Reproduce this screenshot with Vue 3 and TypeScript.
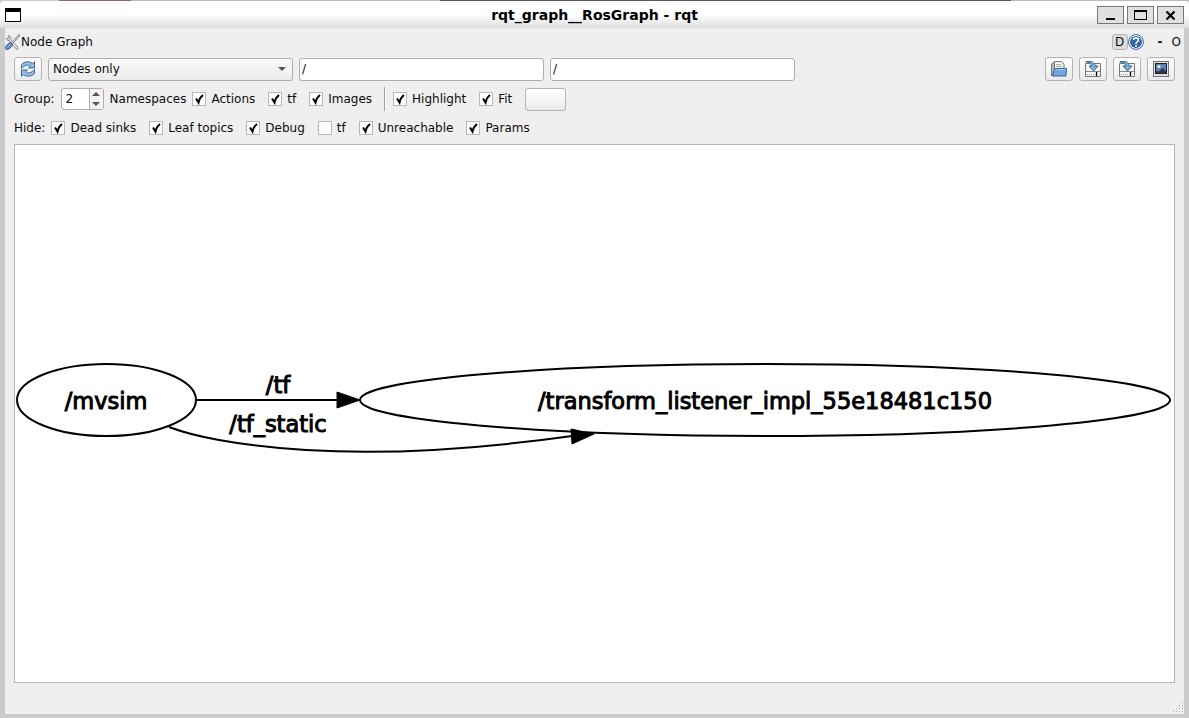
<script setup lang="ts">
import { reactive, ref } from 'vue'

interface Option {
  id: string
  label: string
  on: boolean
}

const mode = ref('Nodes only')
const filterA = ref('/')
const filterB = ref('/')
const depth = ref(2)

const groupOptions = reactive<Option[]>([
  { id: 'actions', label: 'Actions', on: true },
  { id: 'group-tf', label: 'tf', on: true },
  { id: 'images', label: 'Images', on: true },
])
const viewOptions = reactive<Option[]>([
  { id: 'highlight', label: 'Highlight', on: true },
  { id: 'fit', label: 'Fit', on: true },
])
const hideOptions = reactive<Option[]>([
  { id: 'dead', label: 'Dead sinks', on: true },
  { id: 'leaf', label: 'Leaf topics', on: true },
  { id: 'debug', label: 'Debug', on: true },
  { id: 'hide-tf', label: 'tf', on: false },
  { id: 'unreachable', label: 'Unreachable', on: true },
  { id: 'params', label: 'Params', on: true },
])
</script>

<template>
  <div class="window">
    <div class="backdrop"></div>
    <header class="titlebar">
      <svg class="win-icon" viewBox="0 0 16 14" aria-hidden="true">
        <rect x="0.5" y="0.5" width="15" height="13" fill="#fff" stroke="#000" />
        <rect width="16" height="4" />
      </svg>
      <h1>rqt_graph__RosGraph - rqt</h1>
      <div class="win-buttons">
        <button type="button" aria-label="Minimize">
          <svg viewBox="0 0 25 16"><rect x="8" y="11" width="9" height="2" /></svg>
        </button>
        <button type="button" aria-label="Maximize">
          <svg viewBox="0 0 25 16"><path d="M6 3h13v10H6zM7 5v7h11V5z" fill-rule="evenodd" /></svg>
        </button>
        <button type="button" aria-label="Close">
          <svg viewBox="0 0 25 16"><path d="M8.500 4.500l8 8M16.500 4.500l-8 8" stroke="#000" stroke-width="2.200" /></svg>
        </button>
      </div>
    </header>

    <main class="body">
      <div class="dock-title">
        <svg class="tools" viewBox="0 0 15 16" aria-hidden="true">
          <path d="M3.500 5L12 14" stroke="#888" stroke-width="3.200" stroke-linecap="round" />
          <path d="M3.500 5L12 14" stroke="#f2f2f0" stroke-width="1.400" stroke-linecap="round" />
          <path d="M3 1.500L4.500 3.200 3.500 5 1 4.500C1.500 7 5 7.200 5.800 5.200C6.500 3 5 1 3 1.500z" fill="#e8e8e6" stroke="#888" stroke-width=".8" />
          <path d="M14 1.500L7 9" stroke="#888" stroke-width="2.400" stroke-linecap="round" />
          <path d="M14 1.500L7 9" stroke="#eee" stroke-width=".9" />
          <path d="M5.500 8.500L7.500 10.500C6.500 13 4 15.500 1.500 15.500C-.5 14 .5 12.500 2 11z" fill="#729fcf" stroke="#204a87" />
        </svg>
        <span>Node Graph</span>
        <div class="dock-buttons">
          <button type="button" class="d-button">D</button>
          <button type="button" class="plain" aria-label="Help">
            <svg width="16" height="16" viewBox="0 0 16 16">
              <circle cx="8" cy="8" r="7.400" fill="#fff" stroke="#3566a8" />
              <circle cx="8" cy="8" r="6" fill="#3465a4" />
              <path d="M5.500 6C5.500 3.200 10.500 3.200 10.500 6C10.500 7.700 8 7.600 8 10M8 11v1.700" fill="none" stroke="#fff" stroke-width="1.600" />
            </svg>
          </button>
          <button type="button" class="plain dash">-</button>
          <button type="button" class="plain">O</button>
        </div>
      </div>

      <div class="controls">
        <div class="row toolbar">
          <button type="button" class="push icon" aria-label="Refresh">
            <svg viewBox="0 0 16 16">
              <path id="arrow" d="M1.500 7.500V3.500C4 .5 9.500-.2 12.500 2.500L14.500.8V7H8.500L10.500 5C8 3.200 4.500 4 1.500 7.500z" fill="#9dbfe6" stroke="#3465a4" />
              <path d="M14.500 8.500V12.500C12 15.500 6.500 16.200 3.500 13.500L1.500 15.200V9H7.500L5.500 11C8 12.800 11.500 12 14.500 8.500z" fill="#9dbfe6" stroke="#3465a4" />
            </svg>
          </button>
          <div class="combo">
            <select v-model="mode" aria-label="Graph type">
              <option>Nodes only</option>
              <option>Nodes/Topics (active)</option>
              <option>Nodes/Topics (all)</option>
            </select>
            <svg viewBox="0 0 8 4" aria-hidden="true"><path d="M0 0h8L4 4z" /></svg>
          </div>
          <input v-model="filterA" class="field" type="text" aria-label="Namespace filter" />
          <input v-model="filterB" class="field" type="text" aria-label="Topic filter" />
          <div class="file-buttons">
            <button type="button" class="push icon" aria-label="Open">
              <svg viewBox="0 0 16 16">
                <path d="M.5 14.500V3L2 1.500h3v9z" fill="#b8b8b8" stroke="#777" />
                <path d="M3.500 12V.5h7l2.500 2.500v9z" fill="#f4f4f4" stroke="#777" />
                <path d="M5 3.500h5M5 5.500h6" stroke="#aaa" />
                <path d="M3.500 7.500h12l-.5 7.500H1.500z" fill="#76a4dc" stroke="#3465a4" />
                <path d="M4.500 8.500h10" stroke="#a9c8ee" />
              </svg>
            </button>
            <button v-for="kind in ['Save as DOT', 'Save as SVG']" :key="kind" type="button" class="push icon" :aria-label="kind">
              <svg viewBox="0 0 16 16">
                <path d="M.5 2.500h15v13H.5z" fill="#f5f5f3" stroke="#777" />
                <path d="M1 10.500h14" stroke="#888" />
                <path d="M2 13.500h8" stroke="#999" stroke-dasharray="1 1" />
                <path d="M11.500 11v4" stroke="#000" stroke-width="1.300" />
                <path d="M.8.700C6-.3 10 1 10 5h3L8.500 10 4 5h3C7 3 4 1.500.8.700z" fill="#7fb0d8" stroke="#27698e" />
              </svg>
            </button>
            <button type="button" class="push icon" aria-label="Save as image">
              <svg viewBox="0 0 16 16">
                <rect x=".5" y=".5" width="15" height="15" fill="#ddd" stroke="#777" />
                <rect x="2.500" y="2.500" width="11" height="10" fill="#5583be" stroke="#222" />
                <circle cx="6" cy="5.500" r="1.600" fill="#fff7b0" />
                <path d="M3 10l3 .5L9.500 7 13 10v2H3z" fill="#2b3646" />
              </svg>
            </button>
          </div>
        </div>

        <div class="row second">
          <label class="caption" for="depth">Group:</label>
          <div class="spin">
            <input id="depth" v-model="depth" type="number" />
            <div class="steps">
              <button type="button" aria-label="Increase" @click="depth++">
                <svg viewBox="0 0 8 4"><path d="M0 4h8L4 0z" /></svg>
              </button>
              <button type="button" aria-label="Decrease" @click="depth--">
                <svg viewBox="0 0 8 4"><path d="M0 0h8L4 4z" /></svg>
              </button>
            </div>
          </div>
          <label class="caption" for="depth">Namespaces</label>
          <div class="checks">
            <label v-for="o in groupOptions" :key="o.id" class="check">
              <span class="box">
                <input v-model="o.on" type="checkbox" />
                <svg v-if="o.on" viewBox="0 0 14 14"><path d="M4 6.500L6.500 10.500C7 8 8.500 5 11 3" /></svg>
              </span>
              {{ o.label }}
            </label>
          </div>
          <div class="divider"></div>
          <div class="checks">
            <label v-for="o in viewOptions" :key="o.id" class="check">
              <span class="box">
                <input v-model="o.on" type="checkbox" />
                <svg v-if="o.on" viewBox="0 0 14 14"><path d="M4 6.500L6.500 10.500C7 8 8.500 5 11 3" /></svg>
              </span>
              {{ o.label }}
            </label>
          </div>
          <button type="button" class="push blank" aria-label="Fit in view"></button>
        </div>

        <div class="row third">
          <span class="caption">Hide:</span>
          <div class="checks">
            <label v-for="o in hideOptions" :key="o.id" class="check">
              <span class="box">
                <input v-model="o.on" type="checkbox" />
                <svg v-if="o.on" viewBox="0 0 14 14"><path d="M4 6.500L6.500 10.500C7 8 8.500 5 11 3" /></svg>
              </span>
              {{ o.label }}
            </label>
          </div>
        </div>
      </div>

      <section class="canvas">
        <svg viewBox="0 0 2318 1074" role="img" aria-label="Node graph">
          <g fill="none" stroke="#000" stroke-width="4">
            <ellipse cx="183" cy="510" rx="179" ry="72" />
            <ellipse cx="1500" cy="510" rx="810" ry="72" />
            <path d="M362 510H646" />
            <path d="M308 564C340 576 374 584 408 590C642 632 914 610 1114 582" />
          </g>
          <path d="M644 494L690 510L644 526Z" stroke="#000" stroke-width="2" />
          <path d="M1112 568L1158 578L1114 598Z" stroke="#000" stroke-width="2" />
          <g class="graph-text">
            <text x="182" y="528">/mvsim</text>
            <text x="526" y="496">/tf</text>
            <text x="526" y="574">/tf_static</text>
            <text x="1500" y="528">/transform_listener_impl_55e18481c150</text>
          </g>
        </svg>
      </section>

      <footer class="status">
        <svg width="12" height="12" viewBox="0 0 12 12" aria-hidden="true">
          <path d="M10 0h1v1h-1zM7 3h1v1H7zM10 3h1v1h-1zM4 6h1v1H4zM7 6h1v1H7zM10 6h1v1h-1zM1 9h1v1H1zM4 9h1v1H4zM7 9h1v1H7zM10 9h1v1h-1z" fill="#b0b0b0" />
        </svg>
      </footer>
    </main>
  </div>
</template>

<style>
body {
  margin: 0;
}
</style>

<style scoped>
.window {
  box-sizing: border-box;
  min-height: 100vh;
  display: flex;
  flex-direction: column;
  background: #cbcbcb;
  font: 12px/16px "DejaVu Sans", sans-serif;
  color: #0c0c0c;
}
.window * {
  box-sizing: border-box;
}
button,
input,
select {
  font: inherit;
  color: inherit;
  margin: 0;
}
button {
  padding: 0;
}
svg {
  display: block;
}
.backdrop {
  height: 1px;
  background: linear-gradient(90deg, #ccc 0 5%, #966 5% 11%, #bbb 11% 37%, #555 37% 85%, #bbb 85%);
}
.titlebar {
  height: 27px;
  display: grid;
  grid-template-columns: 1fr auto 1fr;
  align-items: center;
  padding: 0 5px;
  background: linear-gradient(#fff 50%, #dedede);
  border-radius: 4px 4px 0 0;
}
.win-icon {
  width: 16px;
  height: 14px;
}
h1 {
  margin: 0;
  font-size: 14px;
  line-height: 16px;
  font-weight: bold;
  color: #000;
}
.win-buttons {
  display: flex;
  justify-content: flex-end;
  gap: 3px;
}
.win-buttons button {
  width: 27px;
  height: 18px;
  background: #e0e0e0;
  border: 1px solid #777;
}
.win-buttons svg {
  width: 25px;
  height: 16px;
}
.body {
  flex: 1;
  display: flex;
  flex-direction: column;
  margin: 0 5px 4px;
  background: #efefef;
}
.dock-title {
  height: 27px;
  display: flex;
  align-items: center;
}
.tools {
  width: 15px;
  height: 16px;
  margin-right: 1px;
  fill: none;
}
.dock-buttons {
  margin-left: auto;
  display: flex;
  align-items: center;
  padding-right: 3px;
}
.d-button {
  width: 16px;
  height: 16px;
  line-height: 14px;
  background: #dcdcdc;
  border: 1px solid #b4b4b4;
  border-radius: 3px;
}
.plain {
  background: none;
  border: 0;
}
.dash {
  width: 28px;
  padding-left: 5px;
  font-weight: bold;
}
.controls {
  padding: 0 9px;
}
.row {
  display: flex;
  align-items: center;
}
.toolbar {
  height: 28px;
  gap: 6px;
}
.push {
  background: linear-gradient(#fff, #ebebeb);
  border: 1px solid #b3b3b3;
  border-radius: 3px;
  flex: none;
}
.icon {
  width: 28px;
  height: 24px;
  display: grid;
  place-items: center;
}
.icon svg {
  width: 16px;
  height: 16px;
}
.combo {
  display: grid;
  flex: 0 1 245px;
  align-items: center;
}
.combo > * {
  grid-area: 1 / 1;
}
.combo select {
  appearance: none;
  width: 100%;
  height: 23px;
  padding: 0 4px;
  background: linear-gradient(#fbfbfb, #ebebeb);
  border: 1px solid #adadad;
  border-radius: 3px;
}
.combo svg {
  justify-self: end;
  width: 8px;
  height: 4px;
  margin-right: 7px;
  fill: #555;
  pointer-events: none;
}
.field {
  flex: 0 1 245px;
  min-width: 0;
  height: 23px;
  padding: 0 2px;
  background: #fff;
  border: 1px solid #adadad;
  border-radius: 3px;
}
.file-buttons {
  display: flex;
  gap: 6px;
  margin-left: auto;
}
.second {
  height: 32px;
}
.spin {
  display: flex;
  width: 43px;
  height: 22px;
  margin: 0 6px;
  background: #fff;
  border: 1px solid #adadad;
  border-radius: 3px;
  overflow: hidden;
}
.spin input {
  appearance: textfield;
  flex: 1;
  min-width: 0;
  padding: 0 0 0 4px;
  border: 0;
  background: none;
}
.spin input::-webkit-inner-spin-button {
  appearance: none;
  margin: 0;
}
.steps {
  display: flex;
  flex-direction: column;
  width: 14px;
  background: #f3f3f3;
  border-left: 1px solid #adadad;
}
.steps button {
  flex: 1;
  display: grid;
  place-items: center;
  border: 0;
  background: none;
}
.steps svg {
  width: 8px;
  height: 4px;
  fill: #555;
}
.checks {
  display: flex;
  gap: 13px;
  margin-left: 6px;
}
.check {
  display: flex;
  align-items: center;
  gap: 5px;
  white-space: nowrap;
}
.box {
  display: grid;
  width: 14px;
  height: 14px;
}
.box > * {
  grid-area: 1 / 1;
}
.box input {
  appearance: none;
  width: 14px;
  height: 14px;
  background: #fff;
  border: 1px solid #b8b8b8;
}
.box svg {
  width: 14px;
  height: 14px;
  fill: none;
  stroke: #000;
  stroke-width: 2;
  pointer-events: none;
}
.divider {
  width: 2px;
  height: 24px;
  margin: 0 1px 0 12px;
  border-left: 1px solid #a0a0a0;
  border-right: 1px solid #fff;
}
.blank {
  width: 41px;
  height: 23px;
  margin-left: 13px;
}
.third {
  height: 26px;
}
.canvas {
  flex: 1;
  display: grid;
  margin: 3px 9px 0;
  background: #fff;
  border: 1px solid #b6b6b6;
  min-height: 0;
}
.canvas svg {
  width: 100%;
  height: 100%;
}
.graph-text {
  font: 45px "DejaVu Sans", sans-serif;
  text-anchor: middle;
  fill: #000;
  stroke: #000;
  stroke-width: 2;
}
.status {
  height: 31px;
  display: flex;
  justify-content: flex-end;
  align-items: flex-end;
}
</style>
